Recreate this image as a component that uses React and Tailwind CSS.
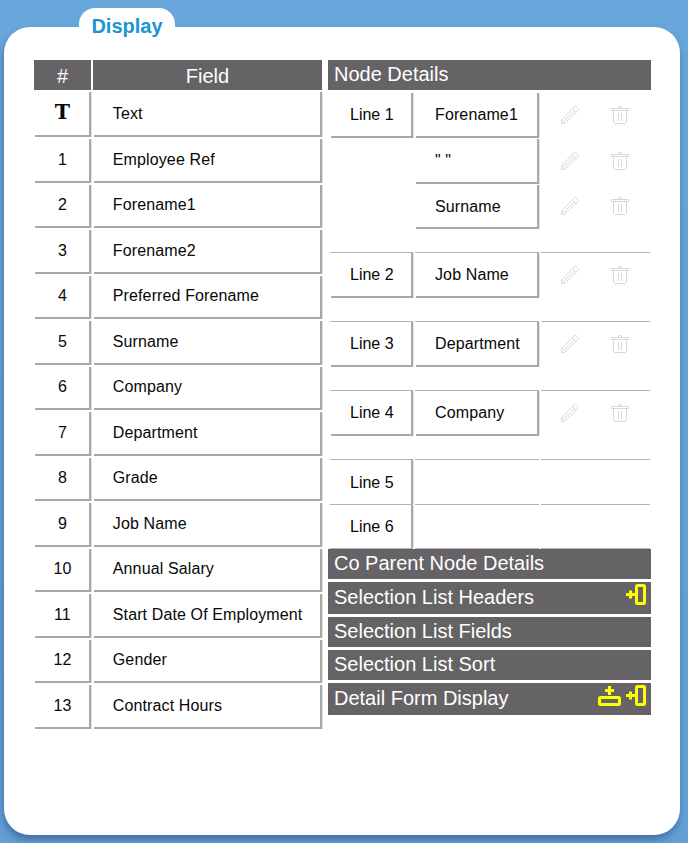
const fields = [
  'Text', 'Employee Ref', 'Forename1', 'Forename2', 'Preferred Forename', 'Surname', 'Company',
  'Department', 'Grade', 'Job Name', 'Annual Salary', 'Start Date Of Employment', 'Gender', 'Contract Hours',
];

const cell = 'border-r-2 border-b-2 border-[#a3aba4] shadow-[1px_0_0_#e6dfe6]';

function Pencil() {
  return (
    <svg className="h-5 w-5" viewBox="0 0 20 20" fill="none" stroke="#d5d8d5" strokeWidth="1">
      <path d="M1.5 15 L13 3 L14.5 1.5 Q15.5 .8 16.5 1.8 L18 3.5 Q18.8 4.5 18 5.5 L6 17 L4.5 18.5 H1.5 Z M12.5 3.5 L16 7.5 M2 14.5 L5.5 18 M4.5 15.5 L14 6" />
    </svg>
  );
}

function Trash() {
  return (
    <svg className="h-5 w-5" viewBox="0 0 20 20" fill="none" stroke="#d5d8d5" strokeWidth="1">
      <path d="M1.5 3.5 H18.5 V5.5 H1.5 Z M8 3.5 L9 1.5 H11 L12 3.5 M3.5 5.5 V17.5 L4.5 18.5 H15.5 L16.5 17.5 V5.5 M8.5 8 V16 M11.5 8 V16" />
    </svg>
  );
}

function AddColumn() {
  return (
    <svg className="h-[22px] w-5" viewBox="0 0 20 22" fill="none" stroke="#ffff00" strokeWidth="3">
      <rect x="10.5" y="1.5" width="8" height="18" rx="1" />
      <path d="M0 10.5 H9 M4.5 6.5 V14.5" />
    </svg>
  );
}

function AddRow() {
  return (
    <svg className="h-[22px] w-[23px]" viewBox="0 0 23 22" fill="none" stroke="#ffff00" strokeWidth="3">
      <rect x="1.5" y="12.5" width="20" height="7" rx="1" />
      <path d="M7 5.5 H16 M11.5 1 V10" />
    </svg>
  );
}

function Row({ label, text, height }) {
  return (
    <div className={`flex ${height}`}>
      <div className={`w-[82px] shrink-0 pt-px pl-[19px] ${label ? cell : ''} flex items-center`}>{label}</div>
      <div className={`ml-[3px] w-[123px] shrink-0 whitespace-pre pt-px pl-[19px] tracking-[0.12px] ${cell} flex items-center`}>{text}</div>
      <div className="flex items-center gap-[30px] pb-[2px] pl-[21px]">
        <Pencil />
        <Trash />
      </div>
    </div>
  );
}

function Separator() {
  return (
    <div className="-ml-px flex h-px gap-[2px]">
      <div className="w-[83px] bg-[#b9aeb9]" />
      <div className="w-[124px] bg-[#b9aeb9]" />
      <div className="w-[109px] bg-[#b9aeb9]" />
    </div>
  );
}

function Bar({ title, height, leading = 'leading-[30px]', children }) {
  return (
    <div className={`flex justify-between bg-[#656365] pl-[6px] pr-[5px] text-xl text-white ${leading} ${height}`}>
      <span>{title}</span>
      <div className="flex gap-[5px] pt-[2px]">{children}</div>
    </div>
  );
}

export default function App() {
  return (
    <div className="flex h-[843px] w-[688px] flex-col bg-linear-to-b from-[#67a7dc] to-[#659fd6] pl-1 pt-2 font-['Liberation_Sans',Arial,sans-serif] text-base text-[#080808]">
      <div className="z-10 ml-[75px] h-[19px] w-[96px] rounded-t-[16px] bg-white text-center text-xl leading-[36px] font-bold text-[#1b95d2]">
        Display
      </div>
      <div className="flex h-[808px] w-[676px] items-start rounded-[26px] bg-white pl-[30px] pt-[33px] shadow-[-1px_5px_9px_-1px_#2f5b8ccc]">
        <div className="w-[288px]">
          <div className="flex h-[30px] gap-[2px] text-center text-xl leading-[32px] text-white">
            <div className="w-[57px] bg-[#656365]">#</div>
            <div className="w-[229px] bg-[#656365]">Field</div>
          </div>
          {fields.map((name, i) => (
            <div key={name} className={`flex gap-[3px] pl-px pt-[2px] ${i === 0 ? 'h-[47px]' : 'h-[45.5px]'}`}>
              <div className={`flex w-[56px] items-center justify-center pl-px ${cell}`}>
                {i === 0 ? <span className="pb-[3px] font-['DejaVu_Serif',serif] text-[20.5px] leading-none font-bold">T</span> : i}
              </div>
              <div className={`flex w-[229px] items-center pl-[19px] tracking-[0.12px] ${cell}`}>{name}</div>
            </div>
          ))}
        </div>
        <div className="ml-[6px] w-[323px]">
          <Bar title="Node Details" height="h-[30px]" leading="leading-[28px]" />
          <div className="pl-[3px]">
            <div className="flex flex-col gap-[1px] pt-[3px] pb-[22px]">
              <Row label="Line 1" text="Forename1" height="h-[45px]" />
              <Row text={'" "'} height="h-[45px]" />
              <Row text="Surname" height="h-[44px]" />
            </div>
            <div className="h-px" />
            {['Job Name', 'Department', 'Company'].map((name, i) => (
              <div key={name} className="h-[69px]">
                <Separator />
                <Row label={`Line ${i + 2}`} text={name} height="h-[45px]" />
              </div>
            ))}
            {['Line 5', 'Line 6'].map((name) => (
              <div key={name}>
                <Separator />
                <div className="flex h-[43.5px] w-[82px] items-center border-r-2 border-[#a3aba4] pl-[19px] pt-[2px] shadow-[1px_0_0_#e6dfe6]">{name}</div>
              </div>
            ))}
            <Separator />
          </div>
          <div className="flex flex-col gap-[3px]">
            <Bar title="Co Parent Node Details" height="h-[30px]" leading="leading-[28px]" />
            <Bar title="Selection List Headers" height="h-[32px]"><AddColumn /></Bar>
            <Bar title="Selection List Fields" height="h-[30px]" leading="leading-[28px]" />
            <Bar title="Selection List Sort" height="h-[30px]" leading="leading-[28px]" />
            <Bar title="Detail Form Display" height="h-[32px]"><AddRow /><AddColumn /></Bar>
          </div>
        </div>
      </div>
    </div>
  );
}
